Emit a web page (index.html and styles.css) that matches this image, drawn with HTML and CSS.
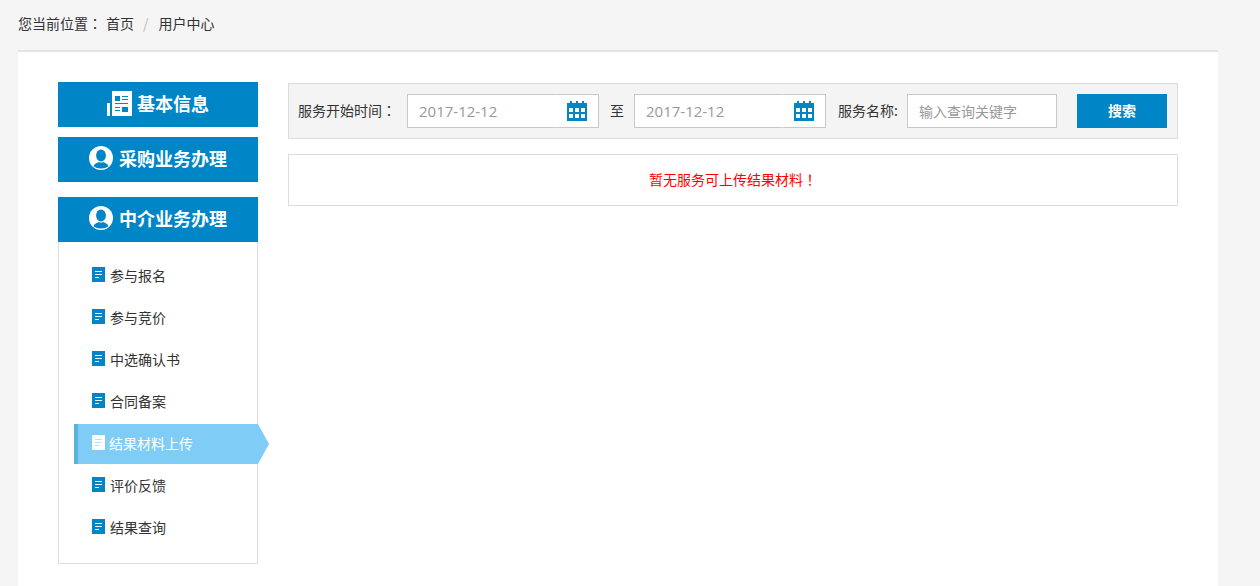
FILE: index.html
```html
<!DOCTYPE html>
<html lang="zh-CN">
<head>
<meta charset="utf-8">
<title>用户中心</title>
<link rel="stylesheet" href="styles.css">
</head>
<body>
<svg class="defs" width="0" height="0" aria-hidden="true">
  <symbol id="i-user" viewBox="0 0 24 24">
    <circle cx="12" cy="12" r="12" fill="#fff"/>
    <ellipse cx="12" cy="9.6" rx="4.900" ry="6" fill="#0085c7"/>
    <path d="M4.500 20.200c.9-2.500 3.300-3.400 5.300-4.200 1.400.8 3 .8 4.400 0 2 .8 4.400 1.700 5.300 4.200A11 11 0 0 1 12 22.500a11 11 0 0 1-7.500-2.300z" fill="#0085c7"/>
  </symbol>
  <symbol id="i-doc" viewBox="0 0 13 15">
    <rect width="13" height="15" fill="currentColor"/>
    <path d="M3 4h7v1H3zM3 7h7v1H3zM3 10h4v1H3z" fill="var(--line)"/>
  </symbol>
  <symbol id="i-cal" viewBox="0 0 20 20">
    <path d="M0 2h3V0h2v2h4V0h2v2h4V0h2v2h3v18H0z" fill="#0085c7"/>
    <path d="M2 7h4v4H2zM8 7h4v4H8zM14 7h4v4h-4zM2 13h4v4H2zM8 13h4v4H8zM14 13h4v4h-4z" fill="#fff"/>
  </symbol>
</svg>

<nav class="crumbs">
  <span>您当前位置<span class="punct" lang="zh-TW">：</span></span>
  <a class="crumb-link">首页</a>
  <span class="crumb-sep">/</span>
  <a class="crumb-link">用户中心</a>
</nav>

<main class="panel">
  <aside class="side">
    <h2 class="side-head">
      <svg class="head-book" viewBox="0 0 25 25" width="25" height="25"><path d="M5 0h20v25H5zM0 12h3v13H0z" fill="#fff"/><path d="M8 5h5v5H8zM15 5h6v1h-6zM15 8h6v1h-6zM8 12h13v1H8zM8 16h5v1H8zM8 19h5v1H8zM15 16h6v5h-6z" fill="#0085c7"/></svg>
      基本信息
    </h2>
    <h2 class="side-head">
      <svg class="head-user" width="24" height="24"><use href="#i-user"/></svg>
      采购业务办理
    </h2>
    <h2 class="side-head side-head-third">
      <svg class="head-user" width="24" height="24"><use href="#i-user"/></svg>
      中介业务办理
    </h2>
    <ul class="menu">
      <li class="menu-item"><svg class="doc" width="13" height="15"><use href="#i-doc"/></svg>参与报名</li>
      <li class="menu-item"><svg class="doc" width="13" height="15"><use href="#i-doc"/></svg>参与竞价</li>
      <li class="menu-item"><svg class="doc" width="13" height="15"><use href="#i-doc"/></svg>中选确认书</li>
      <li class="menu-item"><svg class="doc" width="13" height="15"><use href="#i-doc"/></svg>合同备案</li>
      <li class="menu-item active"><svg class="doc" width="13" height="15"><use href="#i-doc"/></svg>结果材料上传</li>
      <li class="menu-item"><svg class="doc" width="13" height="15"><use href="#i-doc"/></svg>评价反馈</li>
      <li class="menu-item"><svg class="doc" width="13" height="15"><use href="#i-doc"/></svg>结果查询</li>
    </ul>
  </aside>

  <section class="content">
    <form class="search">
      <label class="lbl lbl-start">服务开始时间<span class="punct" lang="zh-TW">：</span></label>
      <div class="date">
        <input class="date-input" value="2017-12-12">
        <span class="date-btn"><svg width="20" height="20"><use href="#i-cal"/></svg></span>
      </div>
      <span class="lbl lbl-to">至</span>
      <div class="date">
        <input class="date-input" value="2017-12-12">
        <span class="date-btn"><svg width="20" height="20"><use href="#i-cal"/></svg></span>
      </div>
      <label class="lbl lbl-name">服务名称:</label>
      <input class="name-input" placeholder="输入查询关键字">
      <button class="search-btn" type="button">搜索</button>
    </form>
    <div class="empty"><span>暂无服务可上传结果材料<span class="punct" lang="zh-TW">！</span></span></div>
  </section>
</main>
</body>
</html>
```

FILE: styles.css
```css
* { box-sizing: border-box; }
html, body { margin: 0; padding: 0; }
body {
  background: #f5f5f5;
  color: #333;
  font: 14px/20px "Noto Sans CJK SC", "Open Sans", sans-serif;
  overflow: hidden;
}
.defs { position: absolute; }
.punct { font-family: "Noto Sans CJK TC", sans-serif; }

.crumbs {
  height: 50px;
  padding: 0 0 4px 18px;
  display: flex;
  align-items: center;
  color: #333;
}
.crumb-link { color: #333; margin-left: 4px; }
.crumb-sep { color: #bbb; margin: 0 10px 0 9px; }
.crumb-sep + .crumb-link { margin-left: 0; }

.panel {
  width: 1200px;
  margin-left: 18px;
  background: #fff;
  border-top: 2px solid #e4e4e4;
  padding: 30px 40px 22px;
  display: flex;
  align-items: flex-start;
}

.side { width: 200px; flex: none; }
.side-head {
  margin: 0 0 10px;
  height: 45px;
  padding-bottom: 4px;
  background: #0085c7;
  color: #fff;
  font-size: 18px;
  font-weight: 700;
  display: flex;
  align-items: center;
  justify-content: center;
  gap: 6px;
}
.side-head-third { margin: 15px 0 0; }
.head-book { margin: 2px -1px 0 0; }
.head-user { margin-top: 1px; }

.menu {
  list-style: none;
  margin: 0;
  padding: 14px 0 15px;
  height: 322px;
  border: 1px solid #ddd;
  border-top: 0;
}
.menu-item {
  position: relative;
  height: 40px;
  margin: 0 0 2px 15px;
  padding: 0 0 2px 18px;
  display: flex;
  align-items: center;
  gap: 5px;
  color: #333;
  font-size: 14px;
}
.doc { color: #0085c7; --line: #fff; flex: none; margin-top: -1px; }
.active {
  background: #7fcdf6;
  border-left: 4px solid #5bb2da;
  padding-left: 14px;
  gap: 4px;
  color: #fff;
  margin-right: -1px;
}
.active::after {
  content: "";
  position: absolute;
  left: 100%;
  top: 0;
  border-left: 11px solid #7fcdf6;
  border-top: 20px solid transparent;
  border-bottom: 20px solid transparent;
}
.active .doc { color: #fff; --line: #b5e2fa; }

.content { width: 890px; margin-left: 30px; flex: none; margin-top: 1px; }
.search {
  height: 56px;
  border: 1px solid #ddd;
  background: #f4f4f4;
  padding: 0 10px 0 9px;
  display: flex;
  align-items: center;
}
.lbl { color: #333; white-space: nowrap; padding-bottom: 2px; }
.lbl-start { width: 109px; flex: none; }
.lbl-to { width: 35px; flex: none; padding-left: 11px; }
.lbl-name { width: 81px; flex: none; padding-left: 12px; }

.date { display: flex; width: 192px; height: 34px; flex: none; }
.date-input {
  width: 149px;
  height: 34px;
  border: 1px solid #c8c8c8;
  border-right-color: #fff;
  padding: 0 0 0 11px;
  background: #fff;
  color: #999;
  font: 15px/20px "Open Sans", "Noto Sans CJK SC", sans-serif;
  outline: 0;
}
.date-btn {
  width: 43px;
  height: 34px;
  background: #fff;
  border: 1px solid #c8c8c8;
  border-left: 0;
  display: flex;
  align-items: center;
  padding-left: 11px;
}
.date-btn svg { display: block; }

.name-input {
  width: 150px;
  height: 34px;
  flex: none;
  border: 1px solid #c8c8c8;
  padding: 0 0 0 11px;
  background: #fff;
  font: 14px/20px "Noto Sans CJK SC", sans-serif;
  outline: 0;
}
.name-input::placeholder { color: #999; opacity: 1; }

.search-btn {
  width: 90px;
  height: 34px;
  flex: none;
  margin-left: 20px;
  padding: 0 0 2px;
  border: 0;
  background: #0085c7;
  color: #fff;
  font: 700 14px/20px "Noto Sans CJK SC", sans-serif;
}

.empty {
  margin-top: 15px;
  height: 52px;
  padding-bottom: 2px;
  border: 1px solid #ddd;
  color: #f00;
  display: flex;
  align-items: center;
  justify-content: center;
}
```
